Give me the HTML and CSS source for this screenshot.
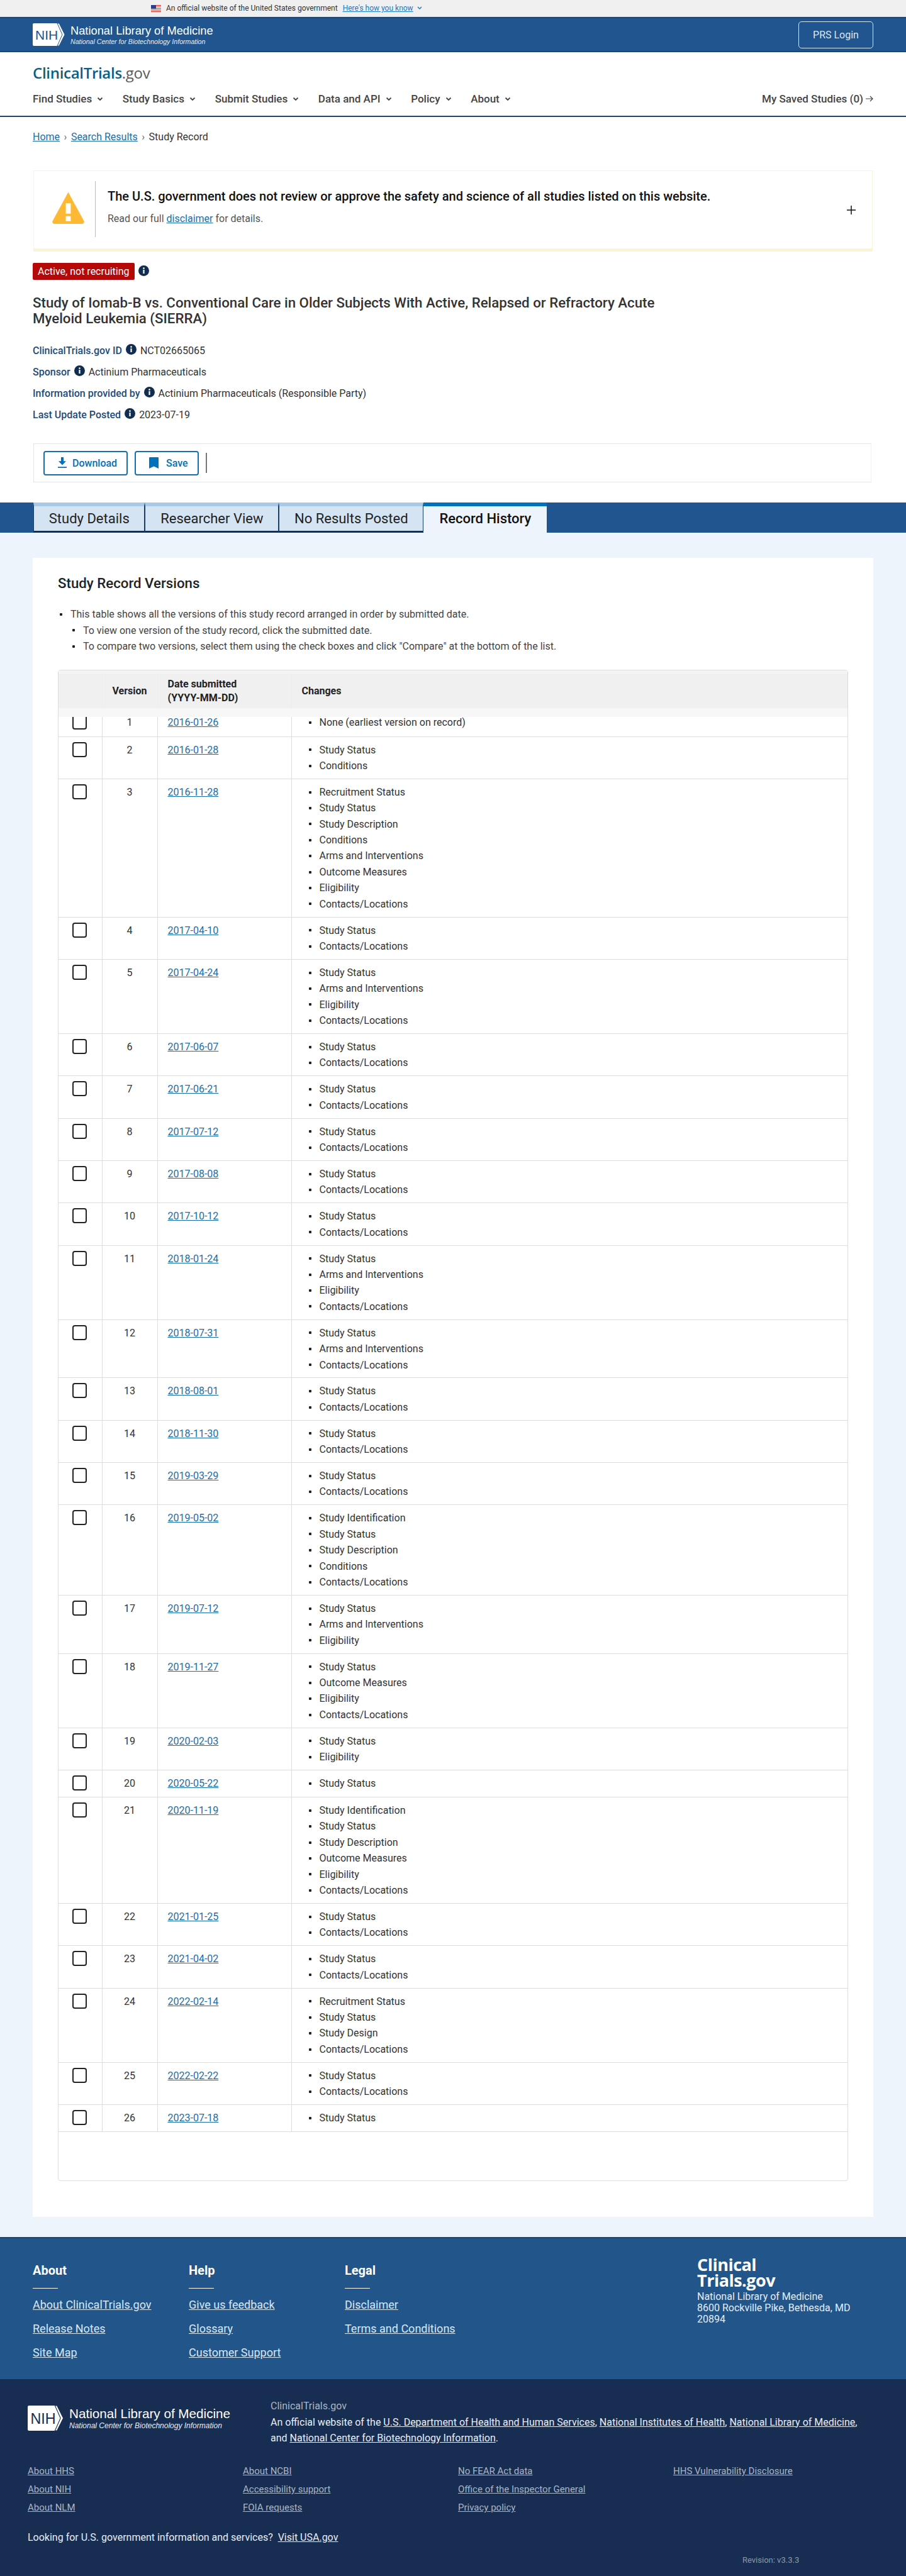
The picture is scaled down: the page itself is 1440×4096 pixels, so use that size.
FILE: index.html
```html
<!DOCTYPE html>
<html lang="en">
  <head>
    <meta charset="UTF-8" />
    <title>Study Record History | ClinicalTrials.gov</title>
    <link rel="stylesheet" href="styles.css">
  </head>
  <body>
    <div class="gov-banner">
      <svg class="flag" width="16" height="11" viewBox="0 0 16 11"><rect width="16" height="11" fill="#fff"/><path d="M0 0h16v1.2H0zM0 2.4h16v1.2H0zM0 4.9h16v1.2H0zM0 7.3h16v1.2H0zM0 9.8h16V11H0z" fill="#d8392b"/><rect width="8" height="6.1" fill="#2b3f8f"/></svg>
      <span>An official website of the United States government</span>
      <a href="#">Here's how you know</a>
      <svg class="chev" width="8" height="6" viewBox="0 0 8 6"><path d="M1 1l3 3 3-3" fill="none" stroke="#2378c3" stroke-width="1.5"/></svg>
    </div>

    <header class="nih-header">
      <div class="nih-logo">
        <svg width="54" height="36" viewBox="0 0 54 36"><path d="M2 0h38l8 18-8 18H2a2 2 0 0 1-2-2V2a2 2 0 0 1 2-2z" fill="#fff"/><path d="M42 0l9 18-9 18h-3l8-18-8-18z" fill="#fff" stroke="#20558f" stroke-width="1"/><text x="4" y="26" font-family="Liberation Sans" font-size="21" fill="#20558f">NIH</text></svg>
        <div>
          <div class="nih-name">National Library of Medicine</div>
          <div class="nih-sub">National Center for Biotechnology Information</div>
        </div>
      </div>
      <a class="prs-login" href="#">PRS Login</a>
    </header>

    <div class="site-header">
      <div class="brand">ClinicalTrials<span>.gov</span></div>
      <nav class="main-nav">
        <a href="#">Find Studies<svg width="10" height="7" viewBox="0 0 10 7"><path d="M1.5 1.5L5 5l3.500-3.500" fill="none" stroke="#444" stroke-width="1.8"/></svg></a>
        <a href="#">Study Basics<svg width="10" height="7" viewBox="0 0 10 7"><path d="M1.5 1.5L5 5l3.500-3.500" fill="none" stroke="#444" stroke-width="1.8"/></svg></a>
        <a href="#">Submit Studies<svg width="10" height="7" viewBox="0 0 10 7"><path d="M1.5 1.5L5 5l3.500-3.500" fill="none" stroke="#444" stroke-width="1.8"/></svg></a>
        <a href="#">Data and API<svg width="10" height="7" viewBox="0 0 10 7"><path d="M1.5 1.5L5 5l3.500-3.500" fill="none" stroke="#444" stroke-width="1.8"/></svg></a>
        <a href="#">Policy<svg width="10" height="7" viewBox="0 0 10 7"><path d="M1.5 1.5L5 5l3.500-3.500" fill="none" stroke="#444" stroke-width="1.8"/></svg></a>
        <a href="#">About<svg width="10" height="7" viewBox="0 0 10 7"><path d="M1.5 1.5L5 5l3.500-3.500" fill="none" stroke="#444" stroke-width="1.8"/></svg></a>
        <a class="saved" href="#">My Saved Studies (0)<svg width="12" height="10" viewBox="0 0 12 10"><path d="M0 5h10M7 1l4 4-4 4" fill="none" stroke="#444" stroke-width="1.2"/></svg></a>
      </nav>
    </div>

    <div class="breadcrumb">
      <a href="#">Home</a><span class="sep">&rsaquo;</span><a href="#">Search Results</a><span class="sep">&rsaquo;</span>Study Record
    </div>

    <div class="alert">
      <svg class="alert-icon" width="51" height="52" viewBox="0 0 52 52"><path d="M26 1L51 47a3 3 0 0 1-2 4H3a3 3 0 0 1-2-4z" fill="#fdb834" stroke="#fdb834" stroke-linejoin="round"/><rect x="22" y="18" width="8" height="17" fill="#fff"/><rect x="22" y="39" width="8" height="8" fill="#fff"/></svg>
      <div class="alert-text">
        <div class="alert-title">The U.S. government does not review or approve the safety and science of all studies listed on this website.</div>
        <div class="alert-sub">Read our full <a href="#">disclaimer</a> for details.</div>
      </div>
      <svg class="alert-plus" width="16" height="16" viewBox="0 0 16 16"><path d="M8 1v14M1 8h14" stroke="#111" stroke-width="1.5"/></svg>
    </div>

    <div class="study-head">
      <div class="status-row">
        <span class="status">Active, not recruiting</span>
        <svg class="info" viewBox="0 0 17 17"><circle cx="8.5" cy="8.5" r="8.5" fill="#112e51"/><circle cx="8.5" cy="4.6" r="1.3" fill="#fff"/><rect x="7.4" y="7" width="2.2" height="6" fill="#fff"/></svg>
      </div>
      <h1>Study of Iomab-B vs. Conventional Care in Older Subjects With Active, Relapsed or Refractory Acute Myeloid Leukemia (SIERRA)</h1>
      <div class="meta"><b>ClinicalTrials.gov ID</b><svg class="info" viewBox="0 0 17 17"><circle cx="8.5" cy="8.5" r="8.5" fill="#112e51"/><circle cx="8.5" cy="4.6" r="1.3" fill="#fff"/><rect x="7.4" y="7" width="2.2" height="6" fill="#fff"/></svg>NCT02665065</div>
      <div class="meta"><b>Sponsor</b><svg class="info" viewBox="0 0 17 17"><circle cx="8.5" cy="8.5" r="8.5" fill="#112e51"/><circle cx="8.5" cy="4.6" r="1.3" fill="#fff"/><rect x="7.4" y="7" width="2.2" height="6" fill="#fff"/></svg>Actinium Pharmaceuticals</div>
      <div class="meta"><b>Information provided by</b><svg class="info" viewBox="0 0 17 17"><circle cx="8.5" cy="8.5" r="8.5" fill="#112e51"/><circle cx="8.5" cy="4.6" r="1.3" fill="#fff"/><rect x="7.4" y="7" width="2.2" height="6" fill="#fff"/></svg>Actinium Pharmaceuticals (Responsible Party)</div>
      <div class="meta"><b>Last Update Posted</b><svg class="info" viewBox="0 0 17 17"><circle cx="8.5" cy="8.5" r="8.5" fill="#112e51"/><circle cx="8.5" cy="4.6" r="1.3" fill="#fff"/><rect x="7.4" y="7" width="2.2" height="6" fill="#fff"/></svg>2023-07-19</div>
      <div class="actions">
        <a class="action-btn download" href="#"><svg width="16" height="18" viewBox="0 0 16 20" preserveAspectRatio="none"><path d="M6 0h4v7h4l-6 7-6-7h4zM1 17h14v2H1z" fill="#0071bc"/></svg>Download</a>
        <a class="action-btn save" href="#"><svg width="15" height="18" viewBox="0 0 15 20" preserveAspectRatio="none"><path d="M1 0h13a1 1 0 0 1 1 1v19l-7.500-4L0 20V1a1 1 0 0 1 1-1z" fill="#0071bc"/></svg>Save</a>
        <span class="action-divider"></span>
      </div>
    </div>

    <div class="tab-bar">
      <a class="tab" href="#">Study Details</a>
      <a class="tab" href="#">Researcher View</a>
      <a class="tab" href="#">No Results Posted</a>
      <a class="tab active" href="#">Record History</a>
    </div>

    <main class="content">
      <section class="card">
        <h2>Study Record Versions</h2>
        <ul class="notes">
          <li>This table shows all the versions of this study record arranged in order by submitted date.
            <ul>
              <li>To view one version of the study record, click the submitted date.</li>
              <li>To compare two versions, select them using the check boxes and click "Compare" at the bottom of the list.</li>
            </ul>
          </li>
        </ul>

        <div class="table-wrap">
          <table class="versions">
            <thead>
              <tr><th class="c-check"></th><th class="c-ver">Version</th><th class="c-date">Date submitted<br />(YYYY-MM-DD)</th><th>Changes</th></tr>
            </thead>
            <tbody>
              <tr><td><input type="checkbox" /></td><td class="num">1</td><td><a href="#">2016-01-26</a></td><td><ul><li>None (earliest version on record)</li></ul></td></tr>
              <tr><td><input type="checkbox" /></td><td class="num">2</td><td><a href="#">2016-01-28</a></td><td><ul><li>Study Status</li><li>Conditions</li></ul></td></tr>
              <tr><td><input type="checkbox" /></td><td class="num">3</td><td><a href="#">2016-11-28</a></td><td><ul><li>Recruitment Status</li><li>Study Status</li><li>Study Description</li><li>Conditions</li><li>Arms and Interventions</li><li>Outcome Measures</li><li>Eligibility</li><li>Contacts/Locations</li></ul></td></tr>
              <tr><td><input type="checkbox" /></td><td class="num">4</td><td><a href="#">2017-04-10</a></td><td><ul><li>Study Status</li><li>Contacts/Locations</li></ul></td></tr>
              <tr><td><input type="checkbox" /></td><td class="num">5</td><td><a href="#">2017-04-24</a></td><td><ul><li>Study Status</li><li>Arms and Interventions</li><li>Eligibility</li><li>Contacts/Locations</li></ul></td></tr>
              <tr><td><input type="checkbox" /></td><td class="num">6</td><td><a href="#">2017-06-07</a></td><td><ul><li>Study Status</li><li>Contacts/Locations</li></ul></td></tr>
              <tr><td><input type="checkbox" /></td><td class="num">7</td><td><a href="#">2017-06-21</a></td><td><ul><li>Study Status</li><li>Contacts/Locations</li></ul></td></tr>
              <tr><td><input type="checkbox" /></td><td class="num">8</td><td><a href="#">2017-07-12</a></td><td><ul><li>Study Status</li><li>Contacts/Locations</li></ul></td></tr>
              <tr><td><input type="checkbox" /></td><td class="num">9</td><td><a href="#">2017-08-08</a></td><td><ul><li>Study Status</li><li>Contacts/Locations</li></ul></td></tr>
              <tr><td><input type="checkbox" /></td><td class="num">10</td><td><a href="#">2017-10-12</a></td><td><ul><li>Study Status</li><li>Contacts/Locations</li></ul></td></tr>
              <tr><td><input type="checkbox" /></td><td class="num">11</td><td><a href="#">2018-01-24</a></td><td><ul><li>Study Status</li><li>Arms and Interventions</li><li>Eligibility</li><li>Contacts/Locations</li></ul></td></tr>
              <tr><td><input type="checkbox" /></td><td class="num">12</td><td><a href="#">2018-07-31</a></td><td><ul><li>Study Status</li><li>Arms and Interventions</li><li>Contacts/Locations</li></ul></td></tr>
              <tr><td><input type="checkbox" /></td><td class="num">13</td><td><a href="#">2018-08-01</a></td><td><ul><li>Study Status</li><li>Contacts/Locations</li></ul></td></tr>
              <tr><td><input type="checkbox" /></td><td class="num">14</td><td><a href="#">2018-11-30</a></td><td><ul><li>Study Status</li><li>Contacts/Locations</li></ul></td></tr>
              <tr><td><input type="checkbox" /></td><td class="num">15</td><td><a href="#">2019-03-29</a></td><td><ul><li>Study Status</li><li>Contacts/Locations</li></ul></td></tr>
              <tr><td><input type="checkbox" /></td><td class="num">16</td><td><a href="#">2019-05-02</a></td><td><ul><li>Study Identification</li><li>Study Status</li><li>Study Description</li><li>Conditions</li><li>Contacts/Locations</li></ul></td></tr>
              <tr><td><input type="checkbox" /></td><td class="num">17</td><td><a href="#">2019-07-12</a></td><td><ul><li>Study Status</li><li>Arms and Interventions</li><li>Eligibility</li></ul></td></tr>
              <tr><td><input type="checkbox" /></td><td class="num">18</td><td><a href="#">2019-11-27</a></td><td><ul><li>Study Status</li><li>Outcome Measures</li><li>Eligibility</li><li>Contacts/Locations</li></ul></td></tr>
              <tr><td><input type="checkbox" /></td><td class="num">19</td><td><a href="#">2020-02-03</a></td><td><ul><li>Study Status</li><li>Eligibility</li></ul></td></tr>
              <tr><td><input type="checkbox" /></td><td class="num">20</td><td><a href="#">2020-05-22</a></td><td><ul><li>Study Status</li></ul></td></tr>
              <tr><td><input type="checkbox" /></td><td class="num">21</td><td><a href="#">2020-11-19</a></td><td><ul><li>Study Identification</li><li>Study Status</li><li>Study Description</li><li>Outcome Measures</li><li>Eligibility</li><li>Contacts/Locations</li></ul></td></tr>
              <tr><td><input type="checkbox" /></td><td class="num">22</td><td><a href="#">2021-01-25</a></td><td><ul><li>Study Status</li><li>Contacts/Locations</li></ul></td></tr>
              <tr><td><input type="checkbox" /></td><td class="num">23</td><td><a href="#">2021-04-02</a></td><td><ul><li>Study Status</li><li>Contacts/Locations</li></ul></td></tr>
              <tr><td><input type="checkbox" /></td><td class="num">24</td><td><a href="#">2022-02-14</a></td><td><ul><li>Recruitment Status</li><li>Study Status</li><li>Study Design</li><li>Contacts/Locations</li></ul></td></tr>
              <tr><td><input type="checkbox" /></td><td class="num">25</td><td><a href="#">2022-02-22</a></td><td><ul><li>Study Status</li><li>Contacts/Locations</li></ul></td></tr>
              <tr><td><input type="checkbox" /></td><td class="num">26</td><td><a href="#">2023-07-18</a></td><td><ul><li>Study Status</li></ul></td></tr>
            </tbody>
          </table>
          <div class="head-fade"></div>
        </div>
      </section>
    </main>

    <footer class="footer-top">
      <div class="foot-col">
        <h3>About</h3>
        <a href="#">About ClinicalTrials.gov</a>
        <a href="#">Release Notes</a>
        <a href="#">Site Map</a>
      </div>
      <div class="foot-col">
        <h3>Help</h3>
        <a href="#">Give us feedback</a>
        <a href="#">Glossary</a>
        <a href="#">Customer Support</a>
      </div>
      <div class="foot-col">
        <h3>Legal</h3>
        <a href="#">Disclaimer</a>
        <a href="#">Terms and Conditions</a>
      </div>
      <div class="foot-address">
        <div class="foot-brand">Clinical<br />Trials.gov</div>
        <div>National Library of Medicine<br />8600 Rockville Pike, Bethesda, MD<br />20894</div>
      </div>
    </footer>

    <footer class="footer-bottom">
      <div class="fb-top">
        <div class="nih-logo big">
          <svg width="60" height="40" viewBox="0 0 54 36"><path d="M2 0h38l8 18-8 18H2a2 2 0 0 1-2-2V2a2 2 0 0 1 2-2z" fill="#fff"/><path d="M42 0l9 18-9 18h-3l8-18-8-18z" fill="#fff" stroke="#182d52" stroke-width="1"/><text x="4" y="26" font-family="Liberation Sans" font-size="21" fill="#182d52">NIH</text></svg>
          <div>
            <div class="nih-name">National Library of Medicine</div>
            <div class="nih-sub">National Center for Biotechnology Information</div>
          </div>
        </div>
        <div class="fb-official">
          <div class="fb-site">ClinicalTrials.gov</div>
          An official website of the <a href="#">U.S. Department of Health and Human Services</a>, <a href="#">National Institutes of Health</a>, <a href="#">National Library of Medicine</a>,<br />
          and <a href="#">National Center for Biotechnology Information</a>.
        </div>
      </div>
      <div class="fb-links">
        <a href="#">About HHS</a><a href="#">About NCBI</a><a href="#">No FEAR Act data</a><a href="#">HHS Vulnerability Disclosure</a>
        <a href="#">About NIH</a><a href="#">Accessibility support</a><a href="#">Office of the Inspector General</a><span></span>
        <a href="#">About NLM</a><a href="#">FOIA requests</a><a href="#">Privacy policy</a><span></span>
      </div>
      <div class="fb-usa">Looking for U.S. government information and services? &nbsp;<a href="#">Visit USA.gov</a></div>
      <div class="fb-rev">Revision: v3.3.3</div>
    </footer>
  </body>
</html>
```

FILE: styles.css
```css
* {
  box-sizing: border-box;
}

body {
  margin: 0;
  background-color: #fff;
  font-family: Roboto, "Liberation Sans", sans-serif;
  font-size: 16px;
  color: #1b1b1b;
}

a {
  color: #1a6ea8;
}

/* top strips */
.gov-banner {
  display: flex;
  align-items: center;
  height: 27px;
  padding-left: 240px;
  background-color: #f0f0f0;
  border-bottom: 1px solid #cfe0f0;
  font-size: 12px;
  color: #333;
}

.gov-banner span {
  margin-left: 8px;
}

.gov-banner a {
  margin-left: 8px;
  color: #2378c3;
}

.gov-banner .chev {
  margin-left: 6px;
}

.nih-header {
  display: flex;
  align-items: center;
  justify-content: space-between;
  height: 56px;
  padding: 0 52px;
  background-color: #20558f;
  border-top: 2px solid #1a4373;
  border-bottom: 2px solid #1a4373;
}

.nih-logo {
  display: flex;
  align-items: center;
  gap: 6px;
}

.nih-name {
  font-family: "Liberation Sans", sans-serif;
  font-size: 18.3px;
  line-height: 22px;
  color: #fff;
}

.nih-sub {
  font-family: "Liberation Sans", sans-serif;
  font-size: 10.6px;
  font-style: italic;
  line-height: 13px;
  color: #e3edf7;
}

.prs-login {
  display: block;
  width: 119px;
  height: 43px;
  border: 1px solid #d8e6f3;
  border-radius: 5px;
  line-height: 41px;
  text-align: center;
  text-decoration: none;
  color: #d9e8f6;
}

.site-header {
  height: 103px;
  padding: 0 52px;
  border-bottom: 2px solid #20456e;
}

.brand {
  padding-top: 17px;
  height: 55px;
  font-family: "Open Sans", sans-serif;
  font-size: 24px;
  font-weight: 600;
  line-height: 32px;
  letter-spacing: -0.3px;
  color: #0a6080;
}

.brand span {
  font-weight: 500;
  color: #5c5c5c;
}

.main-nav {
  display: flex;
  align-items: center;
  gap: 30.7px;
  height: 38px;
}

.main-nav a {
  display: flex;
  align-items: center;
  gap: 8px;
  font-size: 17px;
  font-weight: 500;
  text-decoration: none;
  color: #444;
}

.main-nav .saved {
  gap: 4px;
  margin-left: auto;
}

.breadcrumb {
  padding: 20px 52px 0;
  height: 85px;
  line-height: 24px;
  color: #333;
}

.breadcrumb .sep {
  margin: 0 6.5px;
  color: #666;
}

/* disclaimer */
.alert {
  display: flex;
  align-items: center;
  height: 129px;
  margin: 0 53px 18px;
  padding: 0 25px 0 29px;
  border: 1px solid #f7f3dc;
  border-bottom: 5px solid #f9f4d2;
}

.alert-icon {
  margin-top: -5px;
}

.alert-text {
  flex: 1;
  align-self: stretch;
  margin: 16px 0 18px 17px;
  padding: 11px 0 0 19px;
  border-left: 1px solid #f0b83c;
}

.alert-title {
  font-size: 20px;
  font-weight: 500;
  line-height: 26px;
  color: #111;
}

.alert-sub {
  margin-top: 11px;
  line-height: 24px;
  color: #555;
}

/* study summary */
.study-head {
  padding: 0 52px;
}

.status-row {
  display: flex;
  align-items: center;
  gap: 6px;
}

.status {
  padding: 0 8px;
  height: 27px;
  border-radius: 2px;
  background-color: #b50909;
  line-height: 27px;
  color: #fff;
}

.info {
  width: 17px;
  height: 17px;
  margin: -3px 6px 0;
  flex: none;
}

.status-row .info {
  margin: -3px 0 0 0;
}

h1 {
  margin: 24px 0 21px;
  width: 1040px;
  font-size: 22.25px;
  font-weight: 500;
  line-height: 25px;
  color: #333;
}

.meta {
  display: flex;
  align-items: center;
  height: 34px;
  color: #333;
}

.meta b {
  font-weight: 500;
  color: #1f4a78;
}

.actions {
  display: flex;
  align-items: center;
  gap: 11px;
  height: 62px;
  margin: 29px 3px 32px 1px;
  padding: 0 15px;
  border: 1px solid #e2e6ea;
  border-right-color: #eef0f2;
}

.action-btn {
  display: flex;
  align-items: center;
  height: 39px;
  border: 2px solid #1a6ea8;
  border-radius: 4px;
  font-weight: 500;
  text-decoration: none;
  color: #0071bc;
}

.download {
  width: 134px;
  padding-left: 20px;
  gap: 8px;
}

.save {
  width: 102px;
  padding-left: 21px;
  gap: 12px;
}

.action-divider {
  width: 2px;
  height: 32px;
  background-color: #777;
}

/* tabs */
.tab-bar {
  display: flex;
  height: 48px;
  padding-left: 53px;
  background-color: #20558f;
}

.tab {
  padding: 5px 23.75px 0;
  height: 48px;
  background-color: #d5e4f3;
  border-top: 6px solid #a9c9e8;
  border-left: 1px solid #1a3f66;
  border-right: 1px solid #1a3f66;
  border-bottom: 3px solid #152f52;
  font-size: 22px;
  line-height: 30px;
  text-decoration: none;
  color: #222;
}

.tab.active {
  height: 49px;
  padding: 5px 25px 0;
  background-color: #edf4fb;
  border: 0;
  border-top: 6px solid #0071bc;
  font-weight: 500;
  color: #111;
}

/* record table */
.content {
  padding: 40px 52px 32px;
  background-color: #edf4fb;
}

.card {
  padding: 25px 40px 57px;
  background-color: #fff;
}

h2 {
  margin: 0;
  font-size: 22.25px;
  font-weight: 500;
  line-height: 30px;
  color: #222;
}

.notes {
  margin: 22px 0 0;
  padding-left: 20px;
  line-height: 25.5px;
  color: #444;
}

.notes ul {
  margin: 0;
  padding-left: 20px;
}

.notes li,
.versions li {
  position: relative;
  list-style: none;
}

.notes li::before,
.versions li::before {
  content: "";
  position: absolute;
  left: -17px;
  top: 10.7px;
  width: 4px;
  height: 4px;
  border-radius: 1px;
  background-color: #222;
}

.table-wrap {
  position: relative;
  margin-top: 24px;
  padding-bottom: 77px;
  border: 1px solid #ddd;
  border-radius: 4px;
}

.versions {
  width: 100%;
  table-layout: fixed;
  border-collapse: collapse;
}

.c-check {
  width: 69px;
}

.c-ver {
  width: 88px;
}

.c-date {
  width: 213px;
}

.versions th {
  height: 60px;
  padding: 0 16px;
  background-color: #f0f0f0;
  border-top: 5px solid #f4f4f4;
  border-right: 1px solid #ededed;
  font-weight: 700;
  line-height: 22px;
  text-align: left;
  color: #222;
}

.versions th.c-ver {
  text-align: center;
}

.versions tbody tr {
  height: 43px;
  border-bottom: 1px solid #ddd;
}

.versions td {
  padding: 8px 16px 7.5px;
  border-right: 1px solid #ddd;
  vertical-align: top;
  line-height: 25.4px;
  color: #333;
}

.versions td:first-child {
  padding: 8px 0 0 22px;
}

.versions td:last-child {
  border-right: 0;
}

.versions td.num {
  text-align: center;
}

.versions ul {
  margin: 0;
  padding-left: 28px;
}

.versions input {
  display: block;
  appearance: none;
  width: 23px;
  height: 24px;
  margin: 0;
  background-color: #fff;
  border: 2px solid #222;
  border-radius: 4px;
}

.head-fade {
  position: absolute;
  top: 60px;
  left: 0;
  right: 0;
  height: 14px;
  background-color: #f7f7f7;
}

/* footer */
.footer-top {
  display: flex;
  height: 226px;
  padding: 36px 52px 0;
  background-color: #22568a;
  border-top: 2px solid #164575;
  color: #fff;
}

.foot-col {
  display: flex;
  flex-direction: column;
  align-items: flex-start;
  width: 248px;
}

.foot-col h3 {
  position: relative;
  margin: 0 0 14px;
  padding-bottom: 14px;
  font-size: 20px;
  font-weight: 700;
  line-height: 30px;
}

.foot-col h3::after {
  content: "";
  position: absolute;
  left: 0;
  bottom: 0;
  width: 40px;
  height: 1px;
  background-color: #fff;
}

.foot-col a {
  margin-bottom: 14px;
  font-size: 18px;
  line-height: 24px;
  color: #d9e8f6;
}

.foot-address {
  margin-left: 312px;
  line-height: 18px;
  color: #e3edf7;
}

.foot-brand {
  margin: -7.5px 0 5.5px;
  font-family: "Open Sans", sans-serif;
  font-size: 27px;
  font-weight: 700;
  line-height: 25px;
  letter-spacing: -0.5px;
  color: #fff;
}

.footer-bottom {
  height: 316px;
  padding: 30px 44px 0;
  background-color: #182d52;
  color: #e8eef5;
}

.fb-top {
  display: flex;
  align-items: flex-start;
}

.nih-logo.big {
  width: 386px;
  padding-top: 12px;
}

.big .nih-name {
  font-size: 20.66px;
  line-height: 24px;
}

.big .nih-sub {
  font-size: 12px;
  line-height: 15px;
}

.fb-official {
  width: 950px;
  line-height: 25.5px;
}

.fb-official a,
.fb-usa a {
  color: #e8eef5;
}

.fb-site {
  color: #a9b6c6;
}

.fb-links {
  display: grid;
  grid-template-columns: repeat(4, 342px);
  row-gap: 5px;
  margin-top: 27.5px;
}

.fb-links a {
  justify-self: start;
  font-size: 15px;
  line-height: 24px;
  color: #a9b6c6;
}

.fb-usa {
  margin-top: 24px;
  line-height: 24px;
}

.fb-rev {
  margin: 16px 0 0 1136px;
  font-size: 13px;
  color: #8c99aa;
}
```
